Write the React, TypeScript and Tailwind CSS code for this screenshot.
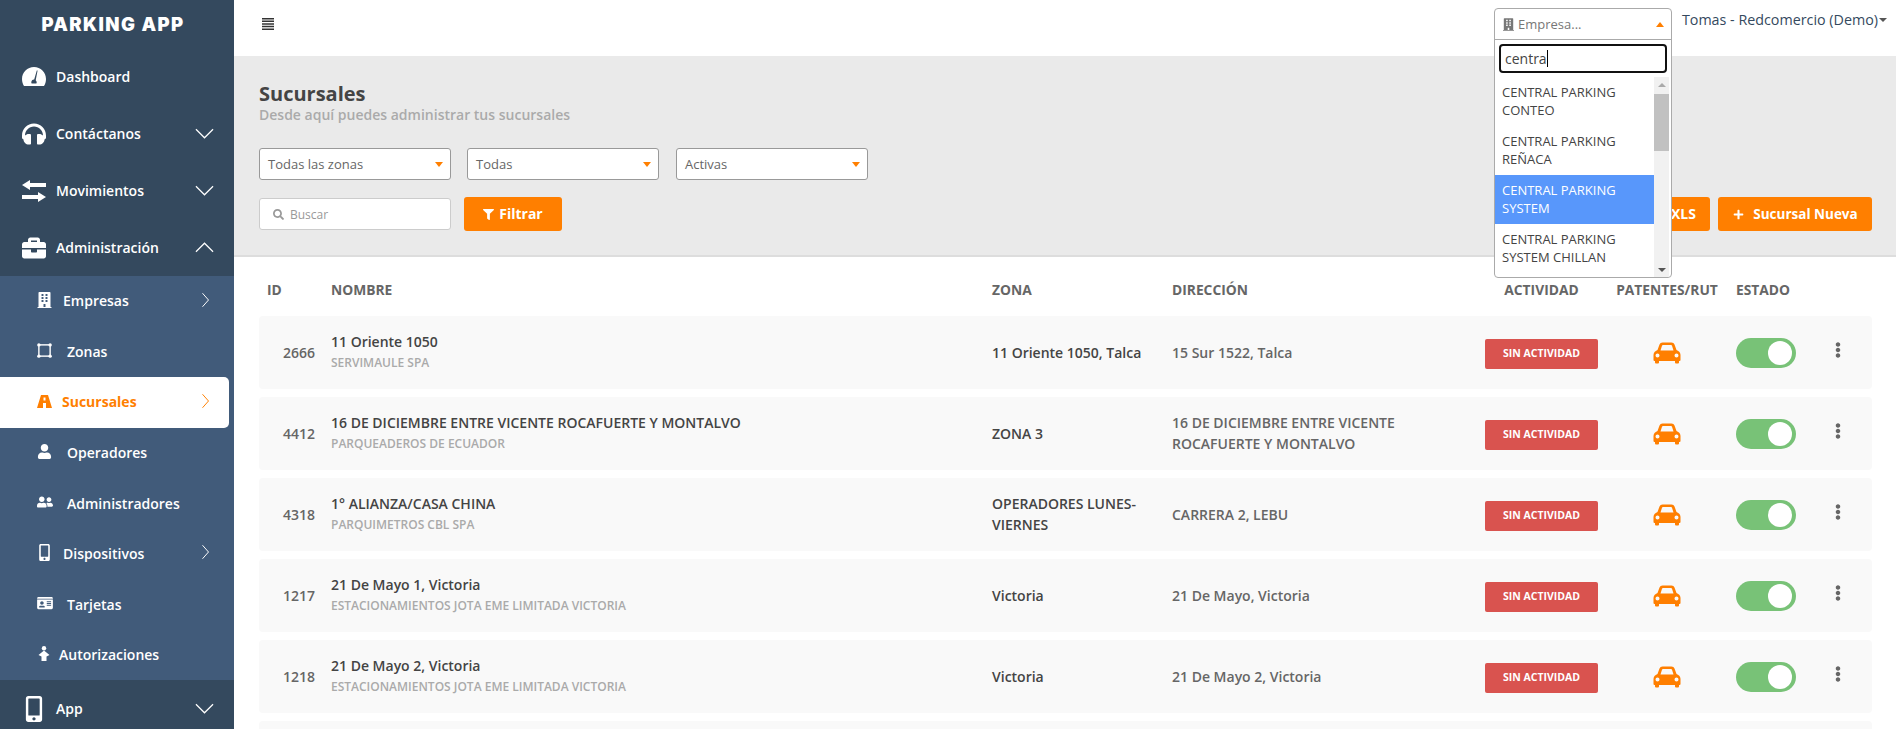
import {
  FaBriefcase,
  FaBuilding,
  FaEllipsisV,
  FaFilter,
  FaHeadphones,
  FaIdCard,
  FaMobileAlt,
  FaPlus,
  FaSearch,
  FaUser,
  FaUserFriends,
} from "react-icons/fa";
import type { ReactNode } from "react";

const font = "font-['Open_Sans',sans-serif]";

const rows = [
  { id: "2666", name: "11 Oriente 1050", company: "SERVIMAULE SPA", zone: "11 Oriente 1050, Talca", address: "15 Sur 1522, Talca" },
  { id: "4412", name: "16 DE DICIEMBRE ENTRE VICENTE ROCAFUERTE Y MONTALVO", company: "PARQUEADEROS DE ECUADOR", zone: "ZONA 3", address: "16 DE DICIEMBRE ENTRE VICENTE ROCAFUERTE Y MONTALVO" },
  { id: "4318", name: "1° ALIANZA/CASA CHINA", company: "PARQUIMETROS CBL SPA", zone: "OPERADORES LUNES-VIERNES", address: "CARRERA 2, LEBU" },
  { id: "1217", name: "21 De Mayo 1, Victoria", company: "ESTACIONAMIENTOS JOTA EME LIMITADA VICTORIA", zone: "Victoria", address: "21 De Mayo, Victoria" },
  { id: "1218", name: "21 De Mayo 2, Victoria", company: "ESTACIONAMIENTOS JOTA EME LIMITADA VICTORIA", zone: "Victoria", address: "21 De Mayo 2, Victoria" },
];

const companies = [
  ["CENTRAL PARKING", "CONTEO"],
  ["CENTRAL PARKING", "REÑACA"],
  ["CENTRAL PARKING", "SYSTEM"],
  ["CENTRAL PARKING", "SYSTEM CHILLAN"],
];

function Chevron({ dir, className }: { dir: "up" | "down" | "right"; className?: string }) {
  const points = { up: "1,11 10,2 19,11", down: "1,2 10,11 19,2", right: "2,1 10,10 2,19" }[dir];
  const box = dir === "right" ? "0 0 12 20" : "0 0 20 13";
  return (
    <svg viewBox={box} fill="none" stroke="currentColor" strokeWidth="1.3" className={className}>
      <polyline points={points} />
    </svg>
  );
}

function Gauge() {
  return (
    <svg viewBox="0 0 24 19" className="w-6 h-[19px]" fill="currentColor">
      <path d="M12 0C5.4 0 0 5.4 0 12c0 2.600.8 5 2 7h20c1.300-2 2-4.400 2-7 0-6.600-5.400-12-12-12Zm3.600 3.600-1.900 9.600c.6.5 1 1.300 1 2.100 0 .5-.1 1-.4 1.300H9.700c-.3-.4-.4-.8-.4-1.300 0-1.500 1.200-2.700 2.700-2.700h.2l2.600-9.200.8.2Z" fillRule="evenodd" />
    </svg>
  );
}

function ArrowsIcon() {
  return (
    <svg viewBox="0 0 24 22" className="w-6 h-[22px]" fill="currentColor">
      <path d="M8 0v3h16v4H8v3L0 5zM16 12v3H0v4h16v3l8-5z" />
    </svg>
  );
}

function RoadIcon() {
  return (
    <svg viewBox="0 0 15 13" className="w-[15px] h-[13px] -mt-[1px]" fill="currentColor">
      <path fillRule="evenodd" d="M4 0H11L15 13H0ZM6.500 2.500v3h2v-3ZM6 8v5h3V8Z" />
    </svg>
  );
}

function ZoneIcon() {
  return (
    <svg viewBox="0 0 16 16" className="w-[15px] h-[15px]" fill="none" stroke="currentColor">
      <rect x="2" y="2" width="12" height="12" strokeWidth="1.500" />
      <circle cx="2" cy="2" r="1.800" fill="currentColor" strokeWidth="0" />
      <circle cx="14" cy="2" r="1.800" fill="currentColor" strokeWidth="0" />
      <circle cx="2" cy="14" r="1.800" fill="currentColor" strokeWidth="0" />
      <circle cx="14" cy="14" r="1.800" fill="currentColor" strokeWidth="0" />
    </svg>
  );
}

function PersonIcon() {
  return (
    <svg viewBox="0 0 14 15" className="w-[14px] h-[15px]" fill="currentColor">
      <circle cx="7" cy="2.200" r="2.200" />
      <path d="M7 4.500 12.500 9 9.500 10.500V15H4.500V10.500L1.500 9Z" />
    </svg>
  );
}

function CarIcon() {
  return (
    <svg viewBox="0 0 28 22" className="w-[28px] h-[22px] text-[#ff7f00]" fill="currentColor">
      <path
        fillRule="evenodd"
        d="M4.500 8 6.500 2.500Q7.200.5 9.500.5H18.500Q20.800.5 21.500 2.500L23.500 8Q27.500 9.500 27.500 13V18Q27.500 19 26.500 19H26V20.500Q26 21.500 25 21.500H23Q22 21.500 22 20.500V19H6V20.500Q6 21.500 5 21.500H3Q2 21.500 2 20.500V19H1.500Q.5 19 .5 18V13Q.5 9.500 4.500 8ZM7.500 8.500H20.500L19 3.800Q18.800 3 18 3H10Q9.200 3 9 3.800ZM4.500 11.500A2 2 0 1 0 4.500 15.500 2 2 0 1 0 4.500 11.500ZM23.500 11.500A2 2 0 1 0 23.500 15.500 2 2 0 1 0 23.500 11.500Z"
      />
    </svg>
  );
}

function MenuIcon() {
  return (
    <svg viewBox="0 0 12 12" className="ml-[28px] mt-[18px] w-[12px] h-[12px] text-[#333]" fill="currentColor">
      <path d="M0 0h12v1.500H0zM0 2.600h12v1.500H0zM0 5.200h12v1.500H0zM0 7.800h12v1.500H0zM0 10.400h12v1.500H0z" />
    </svg>
  );
}

function TopItem({ icon, label, chevron }: { icon: ReactNode; label: string; chevron?: "up" | "down" }) {
  return (
    <div className="h-[57px] shrink-0 flex items-center pl-[22px] pr-[20px] text-white">
      <div className="w-[34px] flex justify-start">{icon}</div>
      <span className="text-sm font-semibold">{label}</span>
      {chevron && <Chevron dir={chevron} className="ml-auto w-[19px] h-[13px]" />}
    </div>
  );
}

function SubItem({ icon, label, textClass, arrow }: { icon: ReactNode; label: string; textClass: string; arrow?: boolean }) {
  return (
    <div className="h-[50.5px] shrink-0 flex items-center pl-[37px] pr-[24px] text-white">
      <div className="-mt-[2px]">{icon}</div>
      <span className={`text-sm font-semibold ${textClass}`}>{label}</span>
      {arrow && <Chevron dir="right" className="ml-auto w-[9px] h-[16px] -mt-[3px]" />}
    </div>
  );
}

function Sidebar() {
  return (
    <aside className="w-[234px] shrink-0 h-[729px] overflow-hidden bg-[#34495e] flex flex-col">
      <div className="h-[48px] shrink-0 flex items-center justify-center pt-[2px] pr-[8px] text-white font-['Inter',sans-serif] font-black text-[18.5px] tracking-[1.4px]">
        PARKING APP
      </div>
      <TopItem icon={<Gauge />} label="Dashboard" />
      <TopItem icon={<FaHeadphones className="w-6 h-6" />} label="Contáctanos" chevron="down" />
      <TopItem icon={<ArrowsIcon />} label="Movimientos" chevron="down" />
      <TopItem icon={<FaBriefcase className="w-6 h-6" />} label="Administración" chevron="up" />
      <div className="bg-[#415b7a] shrink-0">
        <SubItem icon={<FaBuilding className="w-[15px] h-[16px]" />} label="Empresas" textClass="ml-[11px]" arrow />
        <SubItem icon={<ZoneIcon />} label="Zonas" textClass="ml-[15px]" />
        <div className="h-[50.5px] shrink-0 mr-[5px] bg-white rounded-r-[5px] flex items-center pl-[37px] pr-[19px] text-[#ff7f00]">
          <RoadIcon />
          <span className="text-sm font-bold ml-[10px]">Sucursales</span>
          <Chevron dir="right" className="ml-auto w-[9px] h-[16px] -mt-[3px]" />
        </div>
        <SubItem icon={<FaUser className="w-[15px] h-[15px]" />} label="Operadores" textClass="ml-[15px]" />
        <SubItem icon={<FaUserFriends className="w-[16px] h-[14px]" />} label="Administradores" textClass="ml-[14px] mt-[1px]" />
        <SubItem icon={<FaMobileAlt className="w-[15px] h-[17px]" />} label="Dispositivos" textClass="ml-[11px]" arrow />
        <SubItem icon={<FaIdCard className="w-[16px] h-[14px]" />} label="Tarjetas" textClass="ml-[14px] mt-[1px]" />
        <SubItem icon={<PersonIcon />} label="Autorizaciones" textClass="ml-[8px]" />
      </div>
      <TopItem icon={<FaMobileAlt className="w-[24px] h-[26px]" />} label="App" chevron="down" />
    </aside>
  );
}

function FilterSelect({ label, className }: { label: string; className: string }) {
  return (
    <div className={`h-[32px] bg-white border border-[#999] rounded-[3px] flex items-center pl-[8px] pr-[7px] text-[13px] text-[#666] ${className}`}>
      <span className="mt-[1px]">{label}</span>
      <span className="ml-auto w-0 h-0 border-x-[4px] border-x-transparent border-t-[5px] border-t-[#ff7f00]" />
    </div>
  );
}

function Row({ row }: { row: (typeof rows)[number] }) {
  return (
    <div className="h-[73px] shrink-0 bg-[#f9f9f9] rounded-[4px] flex items-center">
      <div className="w-[56px] shrink-0 text-right text-sm font-semibold text-[#666]">{row.id}</div>
      <div className="w-[661px] shrink-0 ml-[16px]">
        <div className="text-sm font-semibold text-[#444] leading-[20px]">{row.name}</div>
        <div className="text-xs font-semibold text-[#aaa] leading-[20px] mt-[1px]">{row.company}</div>
      </div>
      <div className="w-[180px] shrink-0 -mt-[1px] pr-[4px] text-sm font-semibold text-[#444] leading-[21px]">{row.zone}</div>
      <div className="w-[313px] shrink-0 -mt-[1px] pr-[50px] text-sm font-semibold text-[#666] leading-[21px]">{row.address}</div>
      <div className="w-[113px] h-[30px] shrink-0 mt-[2px] bg-[#d9534f] rounded-[2px] text-white text-[10.5px] font-bold flex items-center justify-center">
        SIN ACTIVIDAD
      </div>
      <div className="w-[138px] shrink-0 flex justify-center">
        <CarIcon />
      </div>
      <div className="w-[60px] h-[30px] shrink-0 mt-[1px] rounded-full bg-[#78c277] flex items-center justify-end pr-[4px]">
        <div className="w-[24px] h-[24px] rounded-full bg-white" />
      </div>
      <div className="w-[76px] shrink-0 pl-[8px] flex justify-center text-[#666]">
        <FaEllipsisV className="w-[16px] h-[16px] -mt-[6px]" />
      </div>
    </div>
  );
}

function CompanyDropdown() {
  return (
    <div className="absolute left-[1260px] top-[8px] w-[178px] h-[270px] bg-white border border-[#aaa] rounded-[4px] overflow-hidden z-10">
      <div className="h-[31px] border-b border-[#aaa] flex items-center pl-[8px] pr-[7px]">
        <FaBuilding className="w-[11px] h-[13px] text-[#777]" />
        <span className="ml-[4px] mt-[1px] text-[13px] text-[#777]">Empresa...</span>
        <span className="ml-auto w-0 h-0 border-x-[4px] border-x-transparent border-b-[5px] border-b-[#ff7f00]" />
      </div>
      <div className="mx-[4px] mt-[4px] h-[29px] border-2 border-[#111] rounded-[4px] flex items-center pl-[4px] text-sm text-[#444]">
        centra<span className="w-px h-[17px] bg-black" />
      </div>
      <div className="flex mt-[4px] h-[201px] overflow-hidden">
        <div className="w-[159px]">
          {companies.map((lines, i) => (
            <div
              key={lines[1]}
              className={`h-[49px] px-[7px] pb-[2px] flex flex-col justify-center text-[13px] leading-[18px] ${i === 2 ? "bg-[#5897fb] text-white" : "text-[#444]"}`}
            >
              <span>{lines[0]}</span>
              <span>{lines[1]}</span>
            </div>
          ))}
        </div>
        <div className="w-[15px] bg-[#f1f1f1] flex flex-col items-center">
          <span className="mt-[6px] w-0 h-0 border-x-[4px] border-x-transparent border-b-[4px] border-b-[#aaa]" />
          <span className="mt-[7px] w-full h-[57px] bg-[#c1c1c1]" />
          <span className="mt-auto mb-[6px] w-0 h-0 border-x-[4px] border-x-transparent border-t-[4px] border-t-[#555]" />
        </div>
      </div>
    </div>
  );
}

export default function App() {
  return (
    <div className={`${font} w-[1896px] h-[729px] overflow-hidden flex bg-white`}>
      <Sidebar />
      <main className="relative flex-1 min-w-0 h-[729px] overflow-hidden flex flex-col">
        <CompanyDropdown />
        <header className="h-[56px] shrink-0 bg-white flex items-start">
          <MenuIcon />
          <div className="ml-auto mr-[9px] mt-[9px] flex items-center text-[14.3px] text-[#34495e]">
            <span>Tomas - Redcomercio (Demo)</span>
            <span className="ml-[1px] w-0 h-0 border-x-[4px] border-x-transparent border-t-[4px] border-t-[#555]" />
          </div>
        </header>
        <section className="h-[201px] shrink-0 bg-[#eaeaea] border-b-2 border-[#ddd] pl-[25px] pr-[24px] pt-[26px]">
          <h1 className="text-[20px] leading-[24px] font-bold text-[#444]">Sucursales</h1>
          <p className="text-sm leading-[20px] font-semibold text-[#aaa] -mt-[1px]">Desde aquí puedes administrar tus sucursales</p>
          <div className="flex mt-[23px]">
            <FilterSelect label="Todas las zonas" className="w-[192px]" />
            <FilterSelect label="Todas" className="w-[192px] ml-[16px]" />
            <FilterSelect label="Activas" className="w-[192px] ml-[17px]" />
          </div>
          <div className="flex items-center mt-[17px]">
            <div className="w-[192px] h-[32px] bg-white border border-[#ccc] rounded-[3px] flex items-center pl-[13px] text-xs text-[#999]">
              <FaSearch className="w-[11px] h-[11px]" />
              <span className="ml-[6px] mt-[2px]">Buscar</span>
            </div>
            <button className="ml-[13px] w-[98px] h-[34px] bg-[#ff7f00] rounded-[3px] text-white text-sm font-bold flex items-center justify-center">
              <FaFilter className="w-[11px] h-[11px] mr-[5px]" />
              Filtrar
            </button>
            <button className="ml-auto w-[120px] h-[34px] bg-[#ff7f00] rounded-[3px] text-white text-sm font-bold flex items-center justify-end pr-[14px]">
              XLS
            </button>
            <button className="ml-[8px] w-[154px] h-[34px] pl-[1px] bg-[#ff7f00] rounded-[3px] text-white text-[13.5px] font-bold flex items-center justify-center">
              <FaPlus className="w-[11px] h-[11px] mr-[9px]" />
              Sucursal Nueva
            </button>
          </div>
        </section>
        <div className="flex-1 min-h-0 pl-[25px] pr-[24px]">
          <div className="h-[59px] pt-[8px] flex items-center text-[13.8px] font-bold text-[#666]">
            <div className="w-[72px] pl-[8px]">ID</div>
            <div className="w-[661px]">NOMBRE</div>
            <div className="w-[180px]">ZONA</div>
            <div className="w-[313px]">DIRECCIÓN</div>
            <div className="w-[113px] text-center">ACTIVIDAD</div>
            <div className="w-[138px] text-center">PATENTES/RUT</div>
            <div className="w-[60px]">ESTADO</div>
          </div>
          <div className="flex flex-col gap-2">
            {rows.map((row) => (
              <Row key={row.id} row={row} />
            ))}
            <div className="h-[73px] shrink-0 bg-[#f9f9f9] rounded-[4px]" />
          </div>
        </div>
      </main>
    </div>
  );
}
